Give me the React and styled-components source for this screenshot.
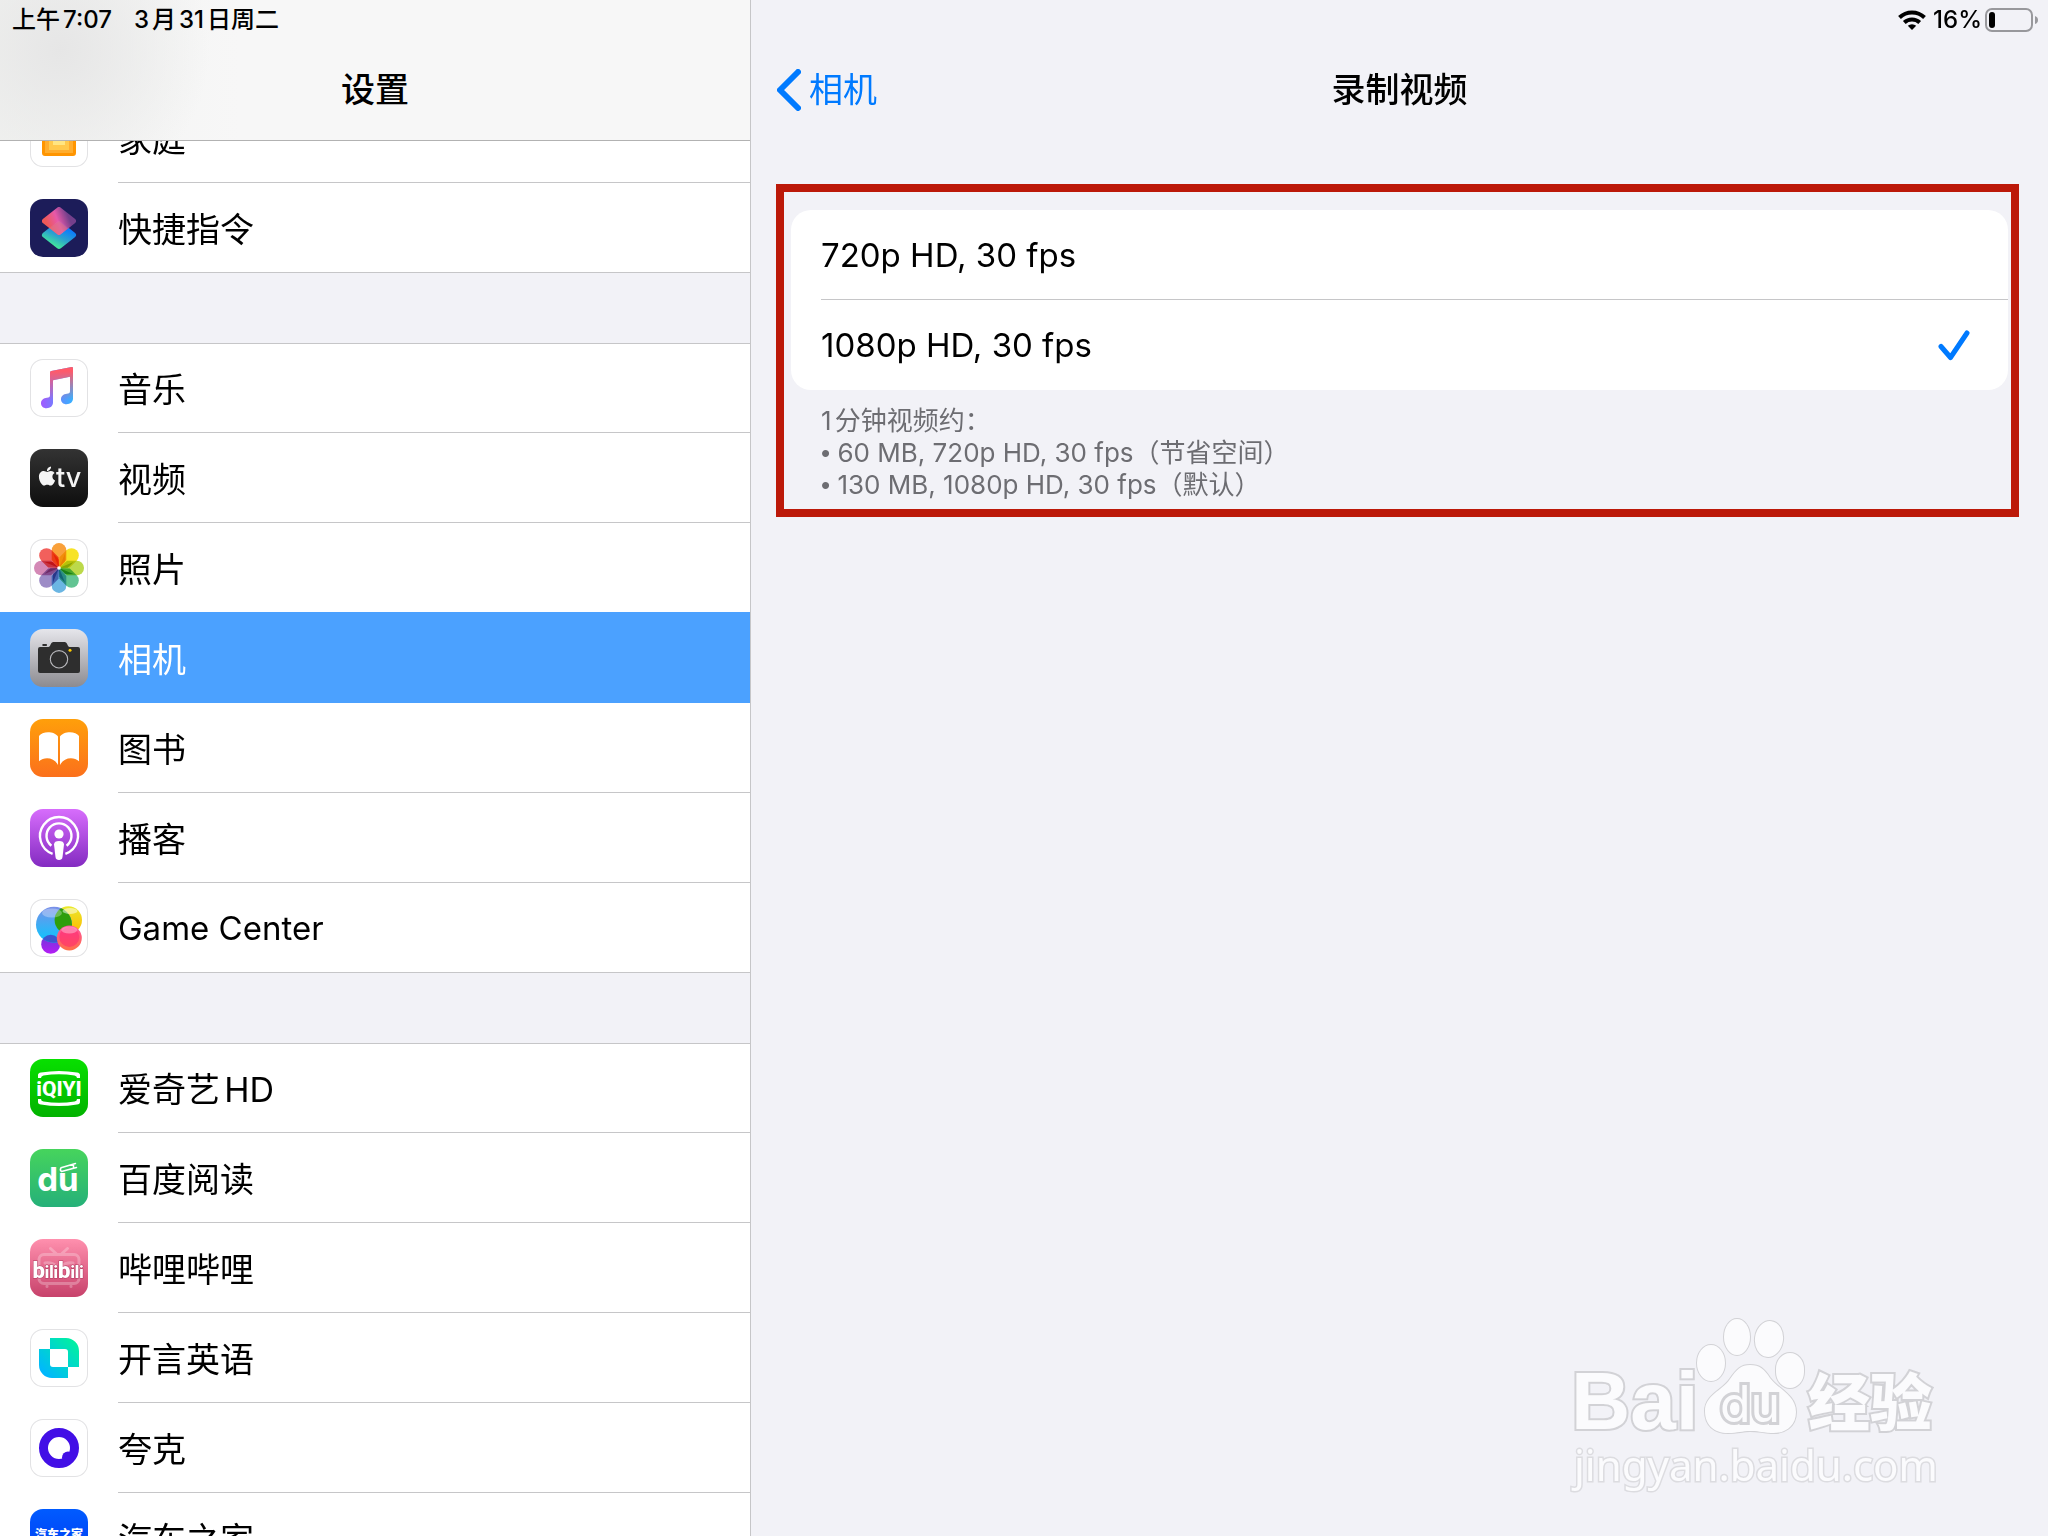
import { useState } from 'react';
import styled, { createGlobalStyle } from 'styled-components';
import { FaApple } from 'react-icons/fa';

const GROUPS = [
  [
    { id: 'home', name: '家庭', outlined: true },
    { id: 'shortcuts', name: '快捷指令' },
  ],
  [
    { id: 'music', name: '音乐', outlined: true },
    { id: 'tv', name: '视频' },
    { id: 'photos', name: '照片', outlined: true },
    { id: 'camera', name: '相机' },
    { id: 'books', name: '图书' },
    { id: 'podcasts', name: '播客' },
    { id: 'gamecenter', name: 'Game Center', latin: true, outlined: true },
  ],
  [
    { id: 'iqiyi', name: '爱奇艺HD' },
    { id: 'duread', name: '百度阅读' },
    { id: 'bilibili', name: '哔哩哔哩' },
    { id: 'kaiyan', name: '开言英语', outlined: true },
    { id: 'quark', name: '夸克', outlined: true },
    { id: 'autohome', name: '汽车之家' },
  ],
];

const FORMATS = [
  { id: '720', label: '720p HD, 30 fps' },
  { id: '1080', label: '1080p HD, 30 fps' },
];

const PETALS = ['#f9a03a', '#f7e326', '#bcd94a', '#62c493', '#6bb6e3', '#9d8cc6', '#d489b6', '#f2605c'];

const Gradient = ({ id, from, to, x2 = 0, y2 = 1 }) => (
  <linearGradient id={id} x1='0' y1='0' x2={x2} y2={y2}>
    <stop offset='0' stopColor={from} />
    <stop offset='1' stopColor={to} />
  </linearGradient>
);

const ICONS = {
  home: (
    <>
      <path d='M29 8 50 25H46V44a3 3 0 0 1-3 3H15a3 3 0 0 1-3-3V25H8Z' fill='#ff9500' />
      <path d='M29 14 43 26V44H15V26Z' fill='#ffad2e' />
      <path d='M29 19 39 28V41H19V28Z' fill='#ffc94c' />
      <path d='M23 28H35V36H23Z' fill='#ffe581' />
    </>
  ),
  shortcuts: (
    <>
      <defs>
        <linearGradient id='scTop' x1='0.1' y1='0.75' x2='0.9' y2='0.5'>
          <stop offset='0' stopColor='#ff5f57' />
          <stop offset='0.5' stopColor='#f95fb0' />
          <stop offset='1' stopColor='#7c4390' />
        </linearGradient>
        <linearGradient id='scBottom' x1='0.3' y1='1' x2='0.8' y2='0.2'>
          <stop offset='0' stopColor='#43e89a' />
          <stop offset='0.5' stopColor='#2aa0d0' />
          <stop offset='1' stopColor='#0a7bff' />
        </linearGradient>
      </defs>
      <rect width='58' height='58' fill='#1c1c59' />
      <path d='M29 25 43 36 29 47 15 36Z' fill='url(#scBottom)' stroke='url(#scBottom)' strokeWidth='6' strokeLinejoin='round' />
      <path d='M29 11 43 22 29 33 15 22Z' fill='url(#scTop)' stroke='url(#scTop)' strokeWidth='6' strokeLinejoin='round' opacity='0.92' />
      <path d='M29 22 38 29.5 29 36 20 29Z' fill='#e0707f' opacity='0.5' />
    </>
  ),
  music: (
    <>
      <defs>
        <Gradient id='muBase' from='#a259ff' to='#35b2ff' x2={1} y2={0} />
        <linearGradient id='muTop' x1='0' y1='0' x2='0' y2='1'>
          <stop offset='0.1' stopColor='#ff5a6a' />
          <stop offset='0.8' stopColor='#ff5a6a' stopOpacity='0' />
        </linearGradient>
      </defs>
      {['url(#muBase)', 'url(#muTop)'].map((fill) => (
        <path
          key={fill}
          fill={fill}
          d='M20 13.5Q20 12.3 21.3 12L41.6 8Q43 7.7 43 9.2V39.5C43 43 40.3 45.2 36.5 45.2 33 45.2 31 43 31 40.2 31 37 33.5 35.2 37 34.8 39.4 34.5 40 34 40 32V17.8L23 21.2V43.5C23 47 20.3 49.2 16.5 49.2 13 49.2 11 47 11 44.2 11 41 13.5 39.2 17 38.8 19.4 38.5 20 38 20 36Z'
        />
      ))}
    </>
  ),
  tv: (
    <>
      <defs>
        <Gradient id='tvBg' from='#333333' to='#0e0e0e' />
      </defs>
      <rect width='58' height='58' fill='url(#tvBg)' />
      <FaApple x='6' y='16' size='22' color='#f5f5f5' />
      <text x='26' y='38' fontFamily='Inter, sans-serif' fontWeight='500' fontSize='27' fill='#f5f5f5'>
        tv
      </text>
    </>
  ),
  photos: (
    <g transform='translate(29 29)' style={{ isolation: 'isolate' }}>
      {PETALS.map((color, i) => (
        <path
          key={color}
          d='M0 0-7.3-8V-17.7a7.3 7.3 0 0 1 14.6 0V-8Z'
          fill={color}
          transform={`rotate(${i * 45})`}
          style={{ mixBlendMode: 'multiply' }}
        />
      ))}
      {PETALS.map((color, i) => (
        <path
          key={color}
          d='M0 0-6-14.5 0-8.5Z'
          fill={color}
          transform={`rotate(${i * 45})`}
          style={{ mixBlendMode: 'multiply' }}
        />
      ))}
      <circle r='1.8' fill='#fff' />
    </g>
  ),
  camera: (
    <>
      <defs>
        <Gradient id='caBg' from='#e6e6eb' to='#8c8b90' />
      </defs>
      <rect width='58' height='58' fill='url(#caBg)' />
      <rect x='12.3' y='15' width='4.7' height='2' rx='0.8' fill='#2e2e2e' />
      <path
        d='M10 18H18.5C20.5 18 20.5 13 23.5 13H34.5C37.5 13 37.5 18 39.5 18H48a2 2 0 0 1 2 2V42a2 2 0 0 1-2 2H10a2 2 0 0 1-2-2V20a2 2 0 0 1 2-2Z'
        fill='#2e2e2e'
      />
      <circle cx='29' cy='30.3' r='8.7' fill='none' stroke='#b8b8bc' strokeWidth='1.1' />
      <circle cx='40' cy='21.3' r='1.5' fill='#ffcc00' />
    </>
  ),
  books: (
    <>
      <defs>
        <Gradient id='boBg' from='#ff9f0a' to='#fb701c' />
      </defs>
      <rect width='58' height='58' fill='url(#boBg)' />
      <path d='M9 17C12 11.8 24.5 11.8 28 17.5V46C24.5 38.5 14.5 37 9 42.3Z' fill='#fff' />
      <path d='M49 17C46 11.8 33.5 11.8 30 17.5V46C33.5 38.5 43.5 37 49 42.3Z' fill='#fff' />
    </>
  ),
  podcasts: (
    <>
      <defs>
        <Gradient id='poBg' from='#d76dfc' to='#832bc1' />
      </defs>
      <rect width='58' height='58' fill='url(#poBg)' />
      <path d='M22.6 44.9A19 19 0 1 1 35.4 44.9' fill='none' stroke='#fff' strokeWidth='2.4' />
      <path d='M21.4 36.8A12.5 12.5 0 1 1 36.6 36.8' fill='none' stroke='#fff' strokeWidth='2.4' />
      <circle cx='29' cy='25' r='4.6' fill='#fff' />
      <path d='M24 35.5C24 33 26 32 29 32S34 33 34 35.5L32.5 48C32.2 50.2 31 51 29 51S25.8 50.2 25.5 48Z' fill='#fff' />
    </>
  ),
  gamecenter: (
    <>
      <defs>
        <Gradient id='gcBlue' from='#7a8fe8' to='#06c8ff' />
        <Gradient id='gcYellow' from='#e9ea2c' to='#ffb800' />
        <Gradient id='gcPink' from='#ff4fa0' to='#ff7048' />
        <Gradient id='gcPurple' from='#6a3bd8' to='#b51cf5' />
        <clipPath id='gcClip'>
          <circle cx='24' cy='25.7' r='18' />
        </clipPath>
      </defs>
      <circle cx='38.3' cy='21' r='13.7' fill='url(#gcYellow)' />
      <circle cx='20.7' cy='45.3' r='9.5' fill='url(#gcPurple)' />
      <circle cx='24' cy='25.7' r='18' fill='url(#gcBlue)' />
      <circle cx='38.3' cy='21' r='13.7' fill='#2f9e0c' clipPath='url(#gcClip)' />
      <circle cx='20.7' cy='45.3' r='9.5' fill='#3d55d0' clipPath='url(#gcClip)' />
      <ellipse cx='22' cy='14' rx='10' ry='4.5' fill='#fff' opacity='0.3' />
      <ellipse cx='40' cy='12' rx='7.5' ry='3' fill='#fff' opacity='0.5' />
      <circle cx='39.3' cy='39' r='12.5' fill='url(#gcPink)' />
      <circle cx='39.3' cy='38' r='10' fill='#ff1f6e' opacity='0.5' />
      <ellipse cx='39.3' cy='31' rx='8' ry='3.5' fill='#fff' opacity='0.35' />
    </>
  ),
  iqiyi: (
    <>
      <defs>
        <Gradient id='iqBg' from='#08e000' to='#02b200' />
      </defs>
      <rect width='58' height='58' fill='url(#iqBg)' />
      <path d='M8 19V16Q8 14 11 13.5 29 10.5 47 13.5 50 14 50 16V19H47Q47 17 44.5 16.5 29 14 13.5 16.5 11 17 11 19Z' fill='#fff' />
      <path d='M8 40V43Q8 45 11 45.5 29 48.5 47 45.5 50 45 50 43V40H47Q47 42 44.5 42.5 29 45 13.5 42.5 11 42 11 40Z' fill='#fff' />
      <text x='29' y='37' textAnchor='middle' fontFamily='Roboto, sans-serif' fontWeight='800' fontSize='21' fill='#fff'>
        iQIYI
      </text>
    </>
  ),
  duread: (
    <>
      <defs>
        <Gradient id='duBg' from='#46d45c' to='#25b079' />
      </defs>
      <rect width='58' height='58' fill='url(#duBg)' />
      <text x='28' y='42' textAnchor='middle' fontFamily='Inter, sans-serif' fontWeight='700' fontSize='33' fill='#fff'>
        du
      </text>
      <path d='M31 18.8 45.5 14.5M31.5 22.5 46.5 18.5M31 18.8Q29.5 21 31.5 22.5M43.5 15.2V19' fill='none' stroke='#fff' strokeWidth='1.5' strokeLinecap='round' />
    </>
  ),
  bilibili: (
    <>
      <defs>
        <Gradient id='biBg' from='#ff90ae' to='#c7426b' />
      </defs>
      <rect width='58' height='58' fill='url(#biBg)' />
      <g fill='none' stroke='#fff' strokeWidth='3' strokeLinecap='round' opacity='0.26'>
        <rect x='9' y='15.5' width='40' height='29' rx='5' />
        <path d='M20.5 9.5 26 14.5M37.5 9.5 32 14.5M17 47V47.5M41 47V47.5M15 24Q22 23 26 27M32 27Q36 23 43 24' />
      </g>
      <text x='28' y='39' textAnchor='middle' fontFamily='Roboto, sans-serif' fontWeight='900' fontSize='16' fill='#fff' stroke='#b23a60' strokeWidth='1' paintOrder='stroke'>
        <tspan fontSize='22'>b</tspan>ili<tspan fontSize='22'>b</tspan>ili
      </text>
    </>
  ),
  kaiyan: (
    <>
      <defs>
        <linearGradient id='kyFill' x1='0' y1='1' x2='1' y2='0'>
          <stop offset='0.1' stopColor='#00b6ff' />
          <stop offset='0.9' stopColor='#00f0a2' />
        </linearGradient>
      </defs>
      <path
        fillRule='evenodd'
        fill='url(#kyFill)'
        d='M20 9H36a13 13 0 0 1 13 13V38H38V49H22a13 13 0 0 1-13-13V20H20ZM20 20V35a3 3 0 0 0 3 3H38V23a3 3 0 0 0-3-3Z'
      />
    </>
  ),
  quark: (
    <>
      <circle cx='29' cy='29' r='15.5' fill='none' stroke='#420fe6' strokeWidth='9' />
      <circle cx='38' cy='38.5' r='6' fill='#420fe6' />
    </>
  ),
  autohome: (
    <>
      <defs>
        <Gradient id='ahBg' from='#005bff' to='#0036f0' />
      </defs>
      <rect width='58' height='58' fill='url(#ahBg)' />
      <text x='29' y='30' textAnchor='middle' fontFamily='"Noto Sans CJK SC", sans-serif' fontWeight='900' fontSize='12' fill='#fff'>
        汽车之家
      </text>
    </>
  ),
};

const Watermark = () => (
  <WatermarkBox>
    <WatermarkLogo viewBox='0 0 380 120' role='img' aria-label='Baidu 经验'>
      <g fill='#fbfbfd' stroke='#d2d2d6' strokeWidth='2' paintOrder='stroke'>
        <text x='1' y='114' fontFamily='"Liberation Sans", sans-serif' fontWeight='700' fontSize='82' strokeWidth='4'>
          Bai
        </text>
        <ellipse cx='141' cy='48' rx='14' ry='18' />
        <ellipse cx='167' cy='22' rx='13' ry='18' />
        <ellipse cx='199' cy='24' rx='14' ry='18' transform='rotate(8 199 24)' />
        <rect x='206' y='38' width='28' height='35' rx='14' ry='16' />
        <path d='M180 50C190 50 194 54 200 63 208 74 226 80 226 97 226 112 214 119 201 118 190 117 188 116 180 116S168 118 158 118C144 118 135 110 135 96 135 80 152 76 160 64 167 54 171 50 180 50Z' />
        <text x='180' y='107' textAnchor='middle' fontFamily='Inter, sans-serif' fontWeight='400' fontSize='50' strokeWidth='6'>
          du
        </text>
        <text x='238' y='111' fontFamily='"Noto Sans CJK SC", sans-serif' fontWeight='900' fontSize='62' strokeWidth='4'>
          经验
        </text>
      </g>
    </WatermarkLogo>
    <WatermarkUrl>jingyan.baidu.com</WatermarkUrl>
  </WatermarkBox>
);

const App = () => {
  const [current, setCurrent] = useState('camera');
  const [format, setFormat] = useState('1080');

  return (
    <Page>
      <GlobalStyle />
      <Sidebar>
        <SidebarHeader>
          <StatusBar>
            <span>上午7:07</span>
            <span>3月31日周二</span>
          </StatusBar>
          <NavBar>
            <Title>设置</Title>
          </NavBar>
        </SidebarHeader>
        <Menu>
          {GROUPS.map((group) => (
            <MenuGroup key={group[0].id}>
              {group.map((item) => (
                <li key={item.id}>
                  <MenuLink href={`#${item.id}`} $active={item.id === current} onClick={() => setCurrent(item.id)}>
                    <AppIcon viewBox='0 0 58 58' $outlined={item.outlined} aria-hidden='true'>
                      {ICONS[item.id]}
                    </AppIcon>
                    <MenuText $latin={item.latin}>{item.name}</MenuText>
                  </MenuLink>
                </li>
              ))}
            </MenuGroup>
          ))}
        </Menu>
      </Sidebar>

      <Detail>
        <StatusBar $end>
          <svg width='32' height='20' viewBox='0 0 32 20' aria-hidden='true'>
            <g fill='none' stroke='#000' strokeWidth='4'>
              <path d='M1.5 7.5A18 18 0 0 1 26.5 7.5' />
              <path d='M6.3 12.5A11.3 11.3 0 0 1 21.7 12.5' />
            </g>
            <path d='M14 20 9.8 15.8A6.2 6.2 0 0 1 18.2 15.8Z' fill='#000' />
          </svg>
          <span>16%</span>
          <svg width='54' height='24' viewBox='0 0 54 24' aria-hidden='true'>
            <rect x='1' y='1' width='46' height='22' rx='6' fill='none' stroke='#98989c' strokeWidth='2' />
            <rect x='4' y='4' width='6' height='16' rx='3' fill='#000' />
            <path d='M50 8Q53 9 53 12T50 16Z' fill='#98989c' />
          </svg>
        </StatusBar>
        <NavBar>
          <BackButton type='button'>
            <svg width='24' height='42' viewBox='0 0 24 42' aria-hidden='true'>
              <path d='M21 3 3 21 21 39' fill='none' stroke='#007aff' strokeWidth='6' strokeLinecap='round' strokeLinejoin='round' />
            </svg>
            相机
          </BackButton>
          <Title>录制视频</Title>
        </NavBar>
        <FormatSection>
          <FormatList role='radiogroup' aria-label='录制视频'>
            {FORMATS.map(({ id, label }) => (
              <FormatRow key={id} htmlFor={`format-${id}`}>
                <FormatRadio
                  type='radio'
                  id={`format-${id}`}
                  name='format'
                  checked={format === id}
                  onChange={() => setFormat(id)}
                />
                <FormatLabel>
                  {label}
                  {format === id && (
                    <svg width='32' height='32' viewBox='0 0 32 32' aria-hidden='true'>
                      <path d='M3 17.5 12.5 28.5 29 4' fill='none' stroke='#007aff' strokeWidth='5' strokeLinecap='round' strokeLinejoin='round' />
                    </svg>
                  )}
                </FormatLabel>
              </FormatRow>
            ))}
          </FormatList>
          <Footnote>
            1分钟视频约：
            <br />
            <Bullet>•</Bullet> 60 MB, 720p HD, 30 fps（节省空间）
            <br />
            <Bullet>•</Bullet> 130 MB, 1080p HD, 30 fps（默认）
          </Footnote>
        </FormatSection>
        <Watermark />
      </Detail>
    </Page>
  );
};

export default App;

const GlobalStyle = createGlobalStyle`
  * {
    box-sizing: border-box;
  }

  body {
    margin: 0;
    color: #000;
    background: #f2f2f7;
    font-family: Inter, 'Noto Sans CJK SC', sans-serif;
    font-size: 34px;
    text-autospace: normal;
  }

  ul {
    list-style: none;
    margin: 0;
    padding: 0;
  }

  svg {
    flex: none;
  }
`;

const Page = styled.div`
  display: grid;
  grid-template-columns: 751fr 1297fr;
  height: 100vh;
  overflow: hidden;
`;

const Sidebar = styled.aside`
  min-width: 0;
  height: 100vh;
  overflow: hidden;
  border-right: 1px solid #c6c6c8;
`;

const SidebarHeader = styled.header`
  position: relative;
  z-index: 1;
  border-bottom: 1px solid #b2b2b2;
  background:
    radial-gradient(circle at 60px 50px, #e6e6e6 0, rgba(230, 230, 230, 0) 150px),
    linear-gradient(90deg, #f2f3f1 0, #f7f7f7 240px);
`;

const StatusBar = styled.div`
  display: flex;
  align-items: center;
  justify-content: ${({ $end }) => ($end ? 'flex-end' : 'flex-start')};
  gap: ${({ $end }) => ($end ? '3px' : '22px')};
  height: 40px;
  padding: ${({ $end }) => ($end ? '0 9px' : '0 12px')};
  font-size: 24px;
  font-weight: 500;
  line-height: 40px;
`;

const NavBar = styled.div`
  display: grid;
  grid-template-columns: 1fr auto 1fr;
  align-items: center;
  height: 100px;
  padding: 0 26px;
  line-height: 40px;
`;

const Title = styled.h1`
  grid-column: 2;
  margin: 0;
  font-size: 34px;
  font-weight: 500;
`;

const BackButton = styled.button`
  display: flex;
  align-items: center;
  justify-self: start;
  gap: 8px;
  padding: 0;
  border: 0;
  background: none;
  color: #007aff;
  font: inherit;
  cursor: pointer;
`;

/* the list is scrolled a little way under the header */
const Menu = styled.nav`
  display: flex;
  flex-direction: column;
  gap: 70px;
  margin-top: -48px;
`;

const MenuGroup = styled.ul`
  background: #fff;
  box-shadow: inset 0 1px #c6c6c8;
`;

const MenuText = styled.span`
  flex: 1;
  display: flex;
  align-items: center;
  height: 100%;
  border-bottom: 1px solid #c6c6c8;
  font-size: ${({ $latin }) => ($latin ? '33px' : '34px')};
`;

const MenuLink = styled.a`
  display: flex;
  align-items: center;
  gap: 30px;
  height: 90px;
  padding-left: 30px;
  color: ${({ $active }) => ($active ? '#fff' : '#000')};
  text-decoration: none;

  /* the filled row also covers the separator above it */
  ${({ $active }) =>
    $active &&
    `
    position: relative;
    background: #4ba1ff;
    box-shadow: 0 -1px #4ba1ff;
  `}

  ${MenuText} {
    ${({ $active }) => $active && 'border-color: #4ba1ff;'}
  }

  li:last-child > & {
    box-shadow: inset 0 -1px #c6c6c8;
  }
`;

const AppIcon = styled.svg`
  width: 58px;
  height: 58px;
  border-radius: 13px;
  box-shadow: ${({ $outlined }) => ($outlined ? 'inset 0 0 0 1px #e2e2e4' : 'none')};
`;

const Detail = styled.main`
  position: relative;
  min-width: 0;
`;

const FormatSection = styled.section`
  position: relative;
  margin: 70px 40px 0;

  &::after {
    content: '';
    position: absolute;
    inset: -26px -11px -16px -15px;
    border: 8px solid #bc1909;
    pointer-events: none;
  }
`;

const FormatList = styled.div`
  overflow: hidden;
  border-radius: 20px;
  background: #fff;
`;

const FormatLabel = styled.span`
  flex: 1;
  display: flex;
  align-items: center;
  justify-content: space-between;
  height: 100%;
  padding-right: 38px;
  font-size: 33px;
`;

const FormatRow = styled.label`
  display: flex;
  height: 90px;
  padding-left: 30px;
  cursor: pointer;

  &:not(:last-child) ${FormatLabel} {
    border-bottom: 1px solid #c6c6c8;
  }
`;

const FormatRadio = styled.input`
  appearance: none;
  width: 0;
  height: 0;
  margin: 0;
`;

const Footnote = styled.p`
  margin: 0;
  padding: 15px 30px 0;
  color: #6d6d72;
  font-size: 26px;
  line-height: 32px;
`;

const Bullet = styled.span`
  font-family: 'Liberation Sans', sans-serif;
`;

const WatermarkBox = styled.div`
  position: absolute;
  right: 98px;
  bottom: 41px;
  width: 380px;
`;

const WatermarkLogo = styled.svg`
  display: block;
  width: 100%;
  overflow: visible;
`;

const WatermarkUrl = styled.div`
  padding-left: 4px;
  color: #fbfbfd;
  font-family: 'Noto Sans', sans-serif;
  font-size: 42px;
  line-height: 60px;
  white-space: nowrap;
  -webkit-text-stroke: 3px #dcdce0;
  paint-order: stroke fill;
`;
